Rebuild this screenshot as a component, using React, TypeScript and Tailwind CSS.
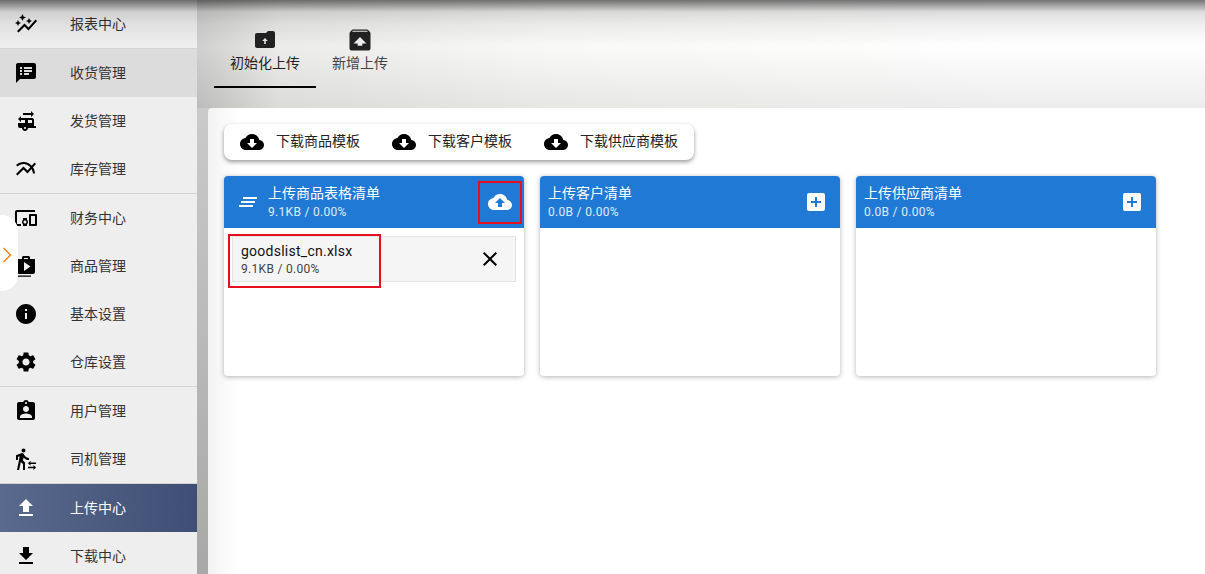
import React from 'react';

const paths = {
    autoGraph: "M14.06 9.94L12 9l2.06-.94L15 6l.94 2.06L18 9l-2.06.94L15 12l-.94-2.06zM4 14l.94-2.06L7 11l-2.06-.94L4 8l-.94 2.06L1 11l2.06.94L4 14zm4.5-5l1.09-2.41L12 5.5l-2.41-1.09L8.5 2 7.41 4.41 5 5.5l2.41 1.09L8.5 9zm-4 11.5l6-6.01 4 4L23 8.93l-1.41-1.41-7.09 7.97-4-4L3 19l1.5 1.5z",
    speakerNotes: "M20 2H4c-1.1 0-1.99.9-1.99 2L2 22l4-4h14c1.1 0 2-.9 2-2V4c0-1.1-.9-2-2-2zM8 14H6v-2h2v2zm0-3H6V9h2v2zm0-3H6V6h2v2zm7 6h-5v-2h5v2zm3-3h-8V9h8v2zm0-3h-8V6h8v2z",
    rvHookup: "M20 17v-6c0-1.1-.9-2-2-2H7V7l-3 3 3 3v-2h4v3H4v3c0 1.1.9 2 2 2h2c0 1.66 1.34 3 3 3s3-1.34 3-3h8v-2h-2zm-9 3c-.55 0-1-.45-1-1s.45-1 1-1 1 .45 1 1-.45 1-1 1zm7-6h-4v-3h4v3zM17 2v2H9v2h8v2l3-3z",
    multiline: "M22 6.92l-1.41-1.41-2.85 3.21C15.68 6.4 12.83 5 9.61 5 6.72 5 4.07 6.16 2 8l1.42 1.42C5.12 7.93 7.27 7 9.61 7c2.74 0 5.09 1.26 6.77 3.24l-2.88 3.24-4-4L2 16.99l1.5 1.5 6-6.01 4 4 4.05-4.55c.75 1.35 1.25 2.9 1.44 4.55H21c-.22-2.3-.95-4.39-2.04-6.14L22 6.92z",
    devices: "M3 6h18V4H3c-1.1 0-2 .9-2 2v12c0 1.1.9 2 2 2h4v-2H3V6zm10 6H9v1.78c-.61.55-1 1.33-1 2.22s.39 1.67 1 2.22V20h4v-1.78c.61-.55 1-1.34 1-2.22s-.39-1.67-1-2.22V12zm-2 5.5c-.83 0-1.5-.67-1.5-1.5s.67-1.5 1.5-1.5 1.5.67 1.5 1.5-.67 1.5-1.5 1.5zM22 8h-6c-.5 0-1 .5-1 1v10c0 .5.5 1 1 1h6c.5 0 1-.5 1-1V9c0-.5-.5-1-1-1zm-1 10h-4v-8h4v8z",
    shop: "M16 5V3.5C16 2.67 15.33 2 14.5 2h-5C8.67 2 8 2.67 8 3.5V5H3v13c0 1.11.89 2 2 2h14c1.11 0 2-.89 2-2V5h-5zm-6-1h4v1h-4V4zm0 13V8l6.5 4.5L10 17zM3 21.5h14v1.2H3z",
    info: "M12 2C6.48 2 2 6.48 2 12s4.48 10 10 10 10-4.48 10-10S17.52 2 12 2zm1 15h-2v-6h2v6zm0-8h-2V7h2v2z",
    settings: "M19.14 12.94c.04-.3.06-.61.06-.94 0-.32-.02-.64-.07-.94l2.03-1.58c.18-.14.23-.41.12-.61l-1.92-3.32c-.12-.22-.37-.29-.59-.22l-2.39.96c-.5-.38-1.03-.7-1.62-.94l-.36-2.54c-.04-.24-.24-.41-.48-.41h-3.84c-.24 0-.43.17-.47.41l-.36 2.54c-.59.24-1.13.57-1.62.94l-2.39-.96c-.22-.08-.47 0-.59.22L2.74 8.87c-.12.21-.08.47.12.61l2.03 1.58c-.05.3-.09.63-.09.94s.02.64.07.94l-2.03 1.58c-.18.14-.23.41-.12.61l1.92 3.32c.12.22.37.29.59.22l2.39-.96c.5.38 1.03.7 1.62.94l.36 2.54c.05.24.24.41.48.41h3.84c.24 0 .44-.17.47-.41l.36-2.54c.59-.24 1.13-.56 1.62-.94l2.39.96c.22.08.47 0 .59-.22l1.92-3.32c.12-.22.07-.47-.12-.61l-2.01-1.58zM12 15.6c-1.98 0-3.6-1.62-3.6-3.6s1.62-3.6 3.6-3.6 3.6 1.62 3.6 3.6-1.62 3.6-3.6 3.6z",
    assignmentInd: "M19 3h-4.18C14.4 1.84 13.3 1 12 1c-1.3 0-2.4.84-2.82 2H5c-1.1 0-2 .9-2 2v14c0 1.1.9 2 2 2h14c1.1 0 2-.9 2-2V5c0-1.1-.9-2-2-2zm-7 0c.55 0 1 .45 1 1s-.45 1-1 1-1-.45-1-1 .45-1 1-1zm0 4c1.66 0 3 1.34 3 3s-1.34 3-3 3-3-1.34-3-3 1.34-3 3-3zm6 12H6v-1.4c0-2 4-3.1 6-3.1s6 1.1 6 3.1V19z",
    transfer: "M16.49 15.5v-1.75L14 16.25l2.49 2.5V17H22v-1.5zm3.02 4.25H14v1.5h5.51V23L22 20.5 19.51 18zM9.5 5.5c1.1 0 2-.9 2-2s-.9-2-2-2-2 .9-2 2 .9 2 2 2zM5.75 8.9L3 23h2.1l1.75-8L9 17v6h2v-7.55L8.95 13.4l.6-3C10.85 12 12.8 13 15 13v-2c-1.85 0-3.45-1-4.35-2.45l-.95-1.6C9.35 6.35 8.7 6 8 6c-.25 0-.5.05-.75.15L2 8.3V13h2V9.65l3.75-.75",
    upload: "M9 16h6v-6h4l-7-7-7 7h4zm-4 2h14v2H5z",
    download: "M19 9h-4V3H9v6H5l7 7 7-7zM5 18v2h14v-2H5z",
    folderUpload: "M4 5h9l2-2h5c1.1 0 2 .9 2 2v13c0 1.1-.9 2-2 2H4c-1.1 0-2-.9-2-2V7c0-1.1.9-2 2-2zm7.2 11h1.6v-3h2L12 10l-2.8 3h2v3z",
    unarchive: "M20.55 5.22l-1.39-1.68C18.88 3.21 18.47 3 18 3H6c-.47 0-.88.21-1.15.55L3.46 5.22C3.17 5.57 3 6.01 3 6.5V19c0 1.1.89 2 2 2h14c1.1 0 2-.9 2-2V6.5c0-.49-.17-.93-.45-1.28zM12 9.5l5.5 5.5H14v2h-4v-2H6.5L12 9.5zM5.12 5l.82-1h12l.93 1H5.12z",
    cloudDownload: "M19.35 10.04C18.67 6.59 15.64 4 12 4 9.11 4 6.6 5.64 5.35 8.04 2.34 8.36 0 10.91 0 14c0 3.31 2.69 6 6 6h13c2.76 0 5-2.24 5-5 0-2.64-2.05-4.78-4.65-4.96zM17 13l-5 5-5-5h3V9h4v4h3z",
    cloudUpload: "M19.35 10.04C18.67 6.59 15.64 4 12 4 9.11 4 6.6 5.64 5.35 8.04 2.34 8.36 0 10.91 0 14c0 3.31 2.69 6 6 6h13c2.76 0 5-2.24 5-5 0-2.64-2.05-4.78-4.65-4.96zM14 13v4h-4v-4H7l5-5 5 5h-3z",
    clearAll: "M5 13h14v-2H5v2zm-2 4h14v-2H3v2zM7 7v2h14V7H7z",
    addBox: "M19 3H5c-1.11 0-2 .9-2 2v14c0 1.1.89 2 2 2h14c1.1 0 2-.9 2-2V5c0-1.1-.9-2-2-2zm-2 10h-4v4h-2v-4H7v-2h4V7h2v4h4v2z",
    close: "M19 6.41L17.59 5 12 10.59 6.41 5 5 6.41 10.59 12 5 17.59 6.41 19 12 13.41 17.59 19 19 17.59 13.41 12z",
};

const Icon = ({ d, className = "w-6 h-6" }: { d: string; className?: string }) => (
    <svg viewBox="0 0 24 24" fill="currentColor" className={`${className} shrink-0`}>
        <path d={d} />
    </svg>
);

type NavItem = { label: string; icon: string; divider?: boolean; hovered?: boolean; active?: boolean };

const navItems: NavItem[] = [
    { label: "报表中心", icon: paths.autoGraph, divider: true },
    { label: "收货管理", icon: paths.speakerNotes, hovered: true },
    { label: "发货管理", icon: paths.rvHookup },
    { label: "库存管理", icon: paths.multiline, divider: true },
    { label: "财务中心", icon: paths.devices },
    { label: "商品管理", icon: paths.shop },
    { label: "基本设置", icon: paths.info },
    { label: "仓库设置", icon: paths.settings, divider: true },
    { label: "用户管理", icon: paths.assignmentInd },
    { label: "司机管理", icon: paths.transfer, divider: true },
    { label: "上传中心", icon: paths.upload, active: true },
    { label: "下载中心", icon: paths.download },
];

const SideRow = ({ item }: { item: NavItem }) => {
    let tone = "text-[#333]";
    if (item.hovered) tone = "bg-[#dcdcdc] text-[#333]";
    if (item.active) tone = "bg-gradient-to-r from-[#5a6a8e] to-[#3f4e74] text-white";
    return (
        <>
            <div className={`h-12 shrink-0 flex items-center pl-[14px] ${tone}`}>
                <Icon d={item.icon} className={`w-6 h-6 ${item.active ? "text-white" : "text-black"}`} />
                <span className="ml-[32px] text-[14px]">{item.label}</span>
            </div>
            {item.divider && <div className="h-px shrink-0 bg-[#d4d4d4]" />}
        </>
    );
};

const templates = ["下载商品模板", "下载客户模板", "下载供应商模板"];

type UploadCard = { title: string; size: string; icon: "clear" | "add" };

const cards: UploadCard[] = [
    { title: "上传商品表格清单", size: "9.1KB / 0.00%", icon: "clear" },
    { title: "上传客户清单", size: "0.0B / 0.00%", icon: "add" },
    { title: "上传供应商清单", size: "0.0B / 0.00%", icon: "add" },
];

const CardBox = ({ card }: { card: UploadCard }) => {
    const hasFile = card.icon === "clear";
    return (
        <div className="relative w-[300px] h-[200px] bg-white rounded overflow-hidden shadow-[0_1px_5px_rgba(0,0,0,0.3)]">
            <div className={`h-[52px] bg-[#2079d4] text-white flex items-center pr-3 ${hasFile ? "pl-3" : "pl-2"}`}>
                {hasFile && <Icon d={paths.clearAll} className="w-6 h-6 mr-2" />}
                <div className="flex-1 min-w-0">
                    <div className="text-[14px] leading-[18px]">{card.title}</div>
                    <div className="mt-[2px] text-[12px] leading-[16px] tracking-[0.3px] text-white/85">{card.size}</div>
                </div>
                {hasFile
                    ? <Icon d={paths.cloudUpload} className="w-6 h-6" />
                    : <Icon d={paths.addBox} className="w-6 h-6" />}
            </div>
            {hasFile && (
                <div className="mx-2 mt-2 h-[46px] bg-[#f5f5f5] border border-[#e4e4e4] flex items-center pl-2 pr-[13px]">
                    <div className="flex-1">
                        <div className="text-[14px] leading-[19px] text-[#111] tracking-[0.25px]">goodslist_cn.xlsx</div>
                        <div className="text-[12px] leading-[16px] tracking-[0.3px] text-[#444]">9.1KB / 0.00%</div>
                    </div>
                    <Icon d={paths.close} className="w-6 h-6 text-black" />
                </div>
            )}
        </div>
    );
};

export default function App() {
    return (
        <div className="relative h-[574px] w-[1205px] overflow-hidden flex font-['Roboto','Noto_Sans_CJK_SC',sans-serif]">
            {/* sidebar */}
            <aside className="w-[197px] shrink-0 flex flex-col bg-[#eeeeee]">
                {navItems.map((item) => (
                    <SideRow key={item.label} item={item} />
                ))}
            </aside>

            {/* page */}
            <main className="flex-1 min-w-0 flex flex-col bg-gradient-to-b from-[#d2d2d0] to-[#a8a8a6]">
                <div className="h-[108px] shrink-0 pt-4 pl-[17px] flex items-start bg-[linear-gradient(to_bottom,transparent_45%,rgba(0,0,0,0.07)),linear-gradient(to_right,transparent,#ebebe9_80px,#f8f8f6_350px,#fefefe_800px)]">
                    <div className="w-[102px] h-[72px] flex flex-col items-center justify-start pt-3 border-b-2 border-black text-[#222]">
                        <Icon d={paths.folderUpload} />
                        <span className="text-[14px] leading-[22px]">初始化上传</span>
                    </div>
                    <div className="w-[88px] h-[72px] flex flex-col items-center justify-start pt-3 text-[#444]">
                        <Icon d={paths.unarchive} className="w-7 h-7 -my-[2px] text-[#222]" />
                        <span className="text-[14px] leading-[22px]">新增上传</span>
                    </div>
                </div>

                <section className="flex-1 ml-[11px] rounded-tl p-4 bg-[linear-gradient(to_right,#f3f3f3,#ffffff_30px)]">
                    <div className="w-[470px] h-9 flex items-center pl-4 rounded-lg bg-white shadow-[0_2px_4px_rgba(0,0,0,0.4)]">
                        {templates.map((label) => (
                            <div key={label} className="flex items-center mr-8 last:mr-0 text-[14px] leading-[20px] text-[#222]">
                                <Icon d={paths.cloudDownload} className="w-6 h-6 text-black mr-3" />
                                <span className="-mt-[2px]">{label}</span>
                            </div>
                        ))}
                    </div>
                    <div className="flex gap-4 mt-4">
                        {cards.map((card) => (
                            <CardBox key={card.title} card={card} />
                        ))}
                    </div>
                </section>
            </main>

            {/* top bar shadow */}
            <div className="absolute top-0 inset-x-0 h-[45px] bg-[linear-gradient(to_bottom,rgba(0,0,0,0.55),rgba(0,0,0,0.13)_12px,rgba(0,0,0,0.06)_24px,transparent)]" />

            {/* drawer handle */}
            <div className="absolute left-0 top-[215px] w-[18px] h-[76px] bg-white rounded-r-2xl flex items-center">
                <svg viewBox="0 0 10 16" className="w-[10px] h-4 ml-[2px] mt-[3px] text-[#f57c00]" fill="none" stroke="currentColor" strokeWidth="1.3">
                    <path d="M1.5 1l7 7-7 7" />
                </svg>
            </div>

            {/* red annotation boxes drawn over the screenshot */}
            <div className="absolute left-[478px] top-[181px] w-[44px] h-[43px] border-2 border-[#e60f1e]" />
            <div className="absolute left-[228px] top-[234px] w-[153px] h-[54px] border-2 border-[#e60f1e]" />
        </div>
    );
}
